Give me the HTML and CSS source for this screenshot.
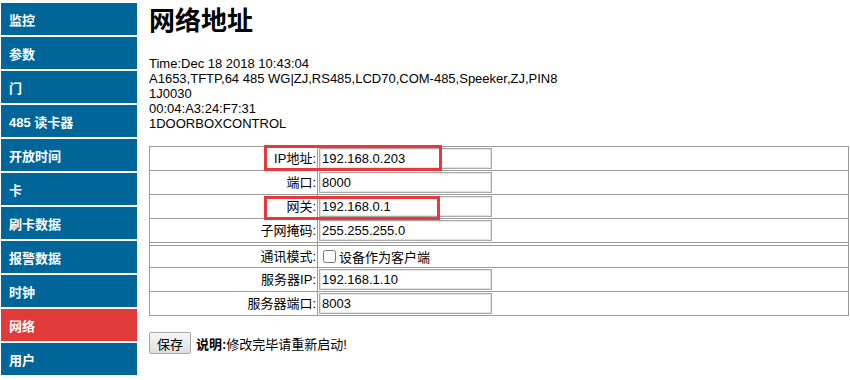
FILE: index.html
```html
<!DOCTYPE html>
<html lang="zh">
<head>
<meta charset="utf-8">
<title>网络地址</title>
<link rel="stylesheet" href="styles.css">
</head>
<body>
<nav class="nav">
  <a class="nav-item">监控</a>
  <a class="nav-item">参数</a>
  <a class="nav-item">门</a>
  <a class="nav-item">485 读卡器</a>
  <a class="nav-item">开放时间</a>
  <a class="nav-item">卡</a>
  <a class="nav-item">刷卡数据</a>
  <a class="nav-item">报警数据</a>
  <a class="nav-item">时钟</a>
  <a class="nav-item active">网络</a>
  <a class="nav-item">用户</a>
</nav>
<main class="main">
  <h1 class="title">网络地址</h1>
  <div class="info">
    Time:Dec 18 2018 10:43:04<br>
    A1653,TFTP,64 485 WG|ZJ,RS485,LCD70,COM-485,Speeker,ZJ,PIN8<br>
    1J0030<br>
    00:04:A3:24:F7:31<br>
    1DOORBOXCONTROL
  </div>
  <table class="form">
    <tr><td class="label">IP地址:</td><td class="val"><input class="field" value="192.168.0.203"></td></tr>
    <tr><td class="label">端口:</td><td class="val"><input class="field" value="8000"></td></tr>
    <tr><td class="label">网关:</td><td class="val"><input class="field" value="192.168.0.1"></td></tr>
    <tr><td class="label">子网掩码:</td><td class="val"><input class="field" value="255.255.255.0"></td></tr>
    <tr class="sep"><td></td><td></td></tr>
    <tr><td class="label">通讯模式:</td><td class="val"><div class="mode"><input type="checkbox" class="check">设备作为客户端</div></td></tr>
    <tr><td class="label">服务器IP:</td><td class="val"><input class="field" value="192.168.1.10"></td></tr>
    <tr><td class="label">服务器端口:</td><td class="val"><input class="field" value="8003"></td></tr>
  </table>
  <div class="actions">
    <button class="btn">保存</button>
    <span class="note"><b>说明:</b>修改完毕请重新启动!</span>
  </div>
  <div class="mark mark-ip"></div>
  <div class="mark mark-gw"></div>
</main>
</body>
</html>
```
FILE: styles.css
```css
html, body {
  margin: 0;
  padding: 0;
  background: #fff;
}
body {
  display: flex;
  align-items: flex-start;
  font-family: "Liberation Sans", "Noto Sans CJK SC", sans-serif;
  font-size: 13px;
  color: #000;
}
.nav {
  margin: 3px 0 0 1px;
  width: 136px;
  display: flex;
  flex-direction: column;
}
.nav-item {
  height: 32px;
  border-bottom: 2px solid #fff;
  background: #006699;
  color: #fff;
  font-weight: bold;
  font-size: 13px;
  padding-left: 8px;
  display: flex;
  align-items: center;
}
.nav-item.active {
  background: #e03a3a;
}
.main {
  position: relative;
  margin-left: 12px;
}
.title {
  margin: 0;
  padding-top: 6px;
  font-size: 26px;
  line-height: 30px;
  font-weight: bold;
}
.info {
  margin-top: 20px;
  line-height: 15px;
}
.form {
  margin-top: 15px;
  width: 700px;
  border-collapse: collapse;
  border: 1px solid #9c9c9c;
}
.form td {
  border: 1px solid #9c9c9c;
  padding: 1px;
  vertical-align: middle;
}
.form .label {
  width: 165px;
  text-align: right;
  padding-right: 1px;
  line-height: 19px;
}
.field {
  display: block;
  box-sizing: border-box;
  width: 173px;
  height: 21px;
  margin: 0;
  padding: 0 2px;
  border: 1px solid #a9a9a9;
  box-shadow: inset 0 0 0 1px #e4e4e4;
  font-family: "Liberation Sans", "Noto Sans CJK SC", sans-serif;
  font-size: 13px;
  color: #000;
}
.sep td {
  height: 2px;
  padding: 0;
  font-size: 0;
  line-height: 0;
}
.mode {
  height: 19px;
  display: flex;
  align-items: center;
}
.check {
  width: 13px;
  height: 13px;
  margin: 0 3px 0 4px;
}
.actions {
  margin-top: 16px;
  display: flex;
  align-items: center;
}
.btn {
  box-sizing: border-box;
  width: 42px;
  height: 22px;
  padding: 0;
  border: 1px solid #a6a6a6;
  border-radius: 2px;
  background: linear-gradient(#f7f7f7, #dedede);
  font-family: "Liberation Sans", "Noto Sans CJK SC", sans-serif;
  font-size: 13px;
  color: #000;
}
.note {
  margin-left: 5px;
}
.mark {
  position: absolute;
  box-sizing: border-box;
  border: 3px solid #e8383d;
}
.mark-ip {
  left: 115px;
  top: 145px;
  width: 178px;
  height: 26px;
}
.mark-gw {
  left: 115px;
  top: 196px;
  width: 176px;
  height: 24px;
}
```
